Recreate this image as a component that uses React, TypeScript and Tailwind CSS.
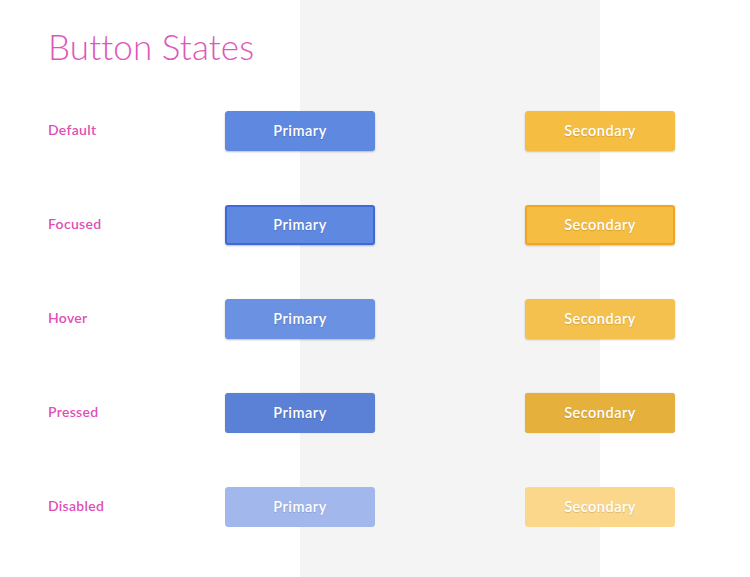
import React from "react";

type Btn = { label: string; cls: string };

const rows: { name: string; primary: string; secondary: string }[] = [
  {
    name: "Default",
    primary: "bg-[#5f88e0] border border-[#5f88e0] shadow-[0_1px_2px_rgba(0,0,0,0.25)]",
    secondary: "bg-[#f5bd41] border border-[#f5bd41] shadow-[0_1px_2px_rgba(0,0,0,0.22)]",
  },
  {
    name: "Focused",
    primary: "bg-[#5f88e0] border-2 border-[#4068d8] shadow-[0_1px_2px_rgba(0,0,0,0.25)]",
    secondary: "bg-[#f5bd41] border-2 border-[#f0a523] shadow-[0_1px_2px_rgba(0,0,0,0.22)]",
  },
  {
    name: "Hover",
    primary: "bg-[#6a91e2] border border-[#6a91e2] shadow-[0_1px_2px_rgba(0,0,0,0.25)]",
    secondary: "bg-[#f5c14e] border border-[#f5c14e] shadow-[0_1px_2px_rgba(0,0,0,0.22)]",
  },
  {
    name: "Pressed",
    primary: "bg-[#5a81d5] border border-[#5a81d5] shadow-[0_0_1px_rgba(0,0,0,0.35)]",
    secondary: "bg-[#e6b03d] border border-[#e6b03d] shadow-[0_0_1px_rgba(0,0,0,0.35)]",
  },
  {
    name: "Disabled",
    primary: "bg-[#a2b8ec] border border-[#a2b8ec]",
    secondary: "bg-[#fad78b] border border-[#fad78b]",
  },
];

function Button({ label, cls }: Btn) {
  return (
    <div
      className={`w-[150px] h-[40px] rounded-[3px] flex items-center justify-center pb-[0px] text-white text-[14.5px] font-semibold tracking-[0.5px] [text-shadow:0_1px_1px_rgba(0,0,0,0.15)] ${cls}`}
    >
      {label}
    </div>
  );
}

export default function App() {
  return (
    <div
      className="w-[750px] h-[577px] overflow-hidden bg-[linear-gradient(to_right,#ffffff_300px,#f4f4f4_300px,#f4f4f4_600px,#ffffff_600px)] pl-[48px] pt-[24px]"
      style={{ fontFamily: "Lato, 'Open Sans', sans-serif" }}
    >
      <h1 className="text-[35px] leading-[44px] font-light text-[#e055bc] m-0 tracking-[0.1px]">Button States</h1>
      <div className="flex flex-col gap-[54px] mt-[43px]">
        {rows.map((r) => (
          <div key={r.name} className="flex items-center h-[40px]">
            <div className="w-[177px] text-[14px] font-semibold text-[#e04fb6] pb-[3px] tracking-[0.3px]">{r.name}</div>
            <Button label="Primary" cls={r.primary} />
            <div className="w-[150px]" />
            <Button label="Secondary" cls={r.secondary} />
          </div>
        ))}
      </div>
    </div>
  );
}
